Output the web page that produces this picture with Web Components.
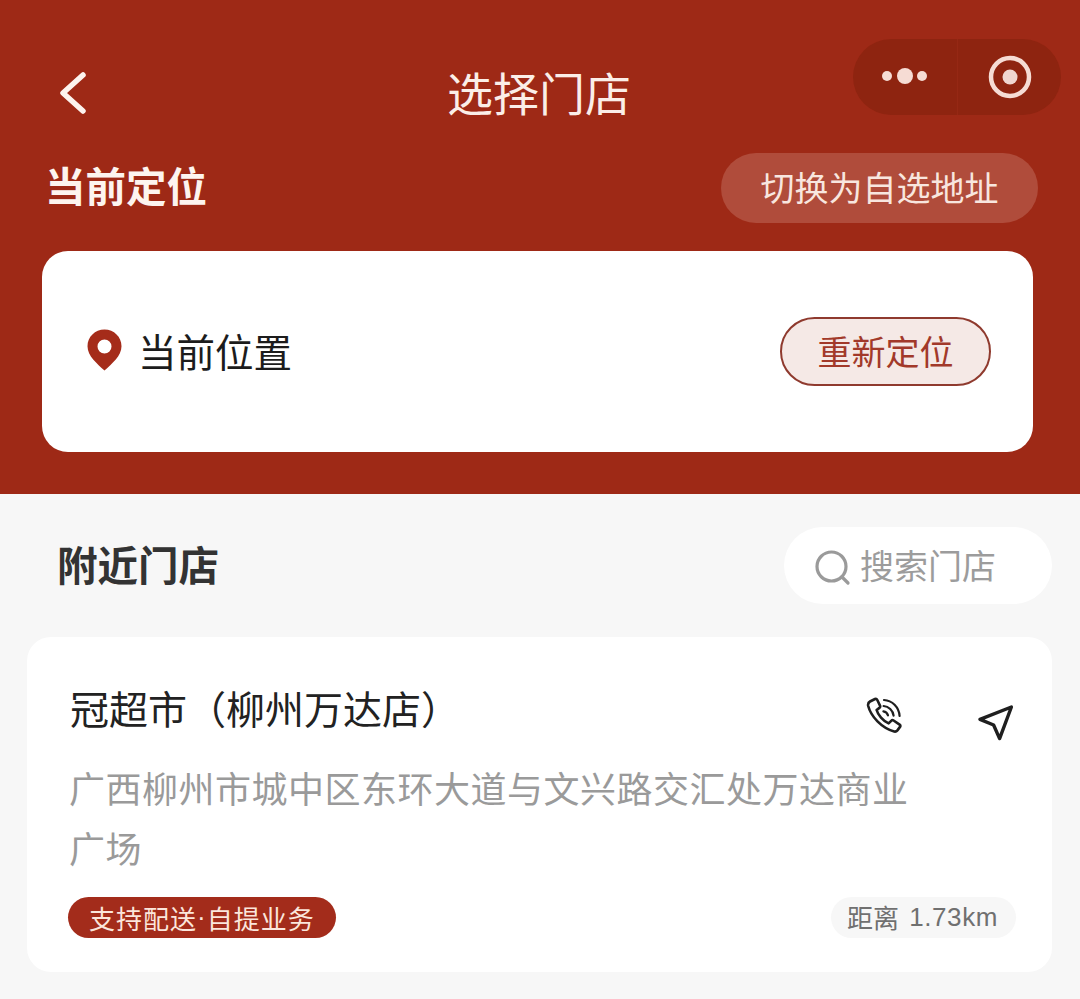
<!DOCTYPE html>
<html lang="zh">
<head>
<meta charset="utf-8">
<title>选择门店</title>
<style>
    html, body {
        margin: 0;
        background: #f7f7f7;
        font-family: "Noto Sans CJK SC", "Liberation Sans", sans-serif;
    }
</style>
</head>
<body>
<store-page></store-page>
<script>
class NavBar extends HTMLElement {
    constructor() {
        super();
        this.attachShadow({ mode: 'open' });
    }

    connectedCallback() {
        this.shadowRoot.innerHTML = `
            <style>
                :host {
                    display: grid;
                    grid-template-columns: 1fr auto 1fr;
                    align-items: start;
                    height: 153px;
                    box-sizing: border-box;
                    padding: 39px 19px 0 19px;
                }
                svg { display: block; }
                .title {
                    font-size: 46px;
                    line-height: 60px;
                    color: #fbeee8;
                    margin: 22px 0 0 -2px;
                }
                .back { margin: 31px 0 0 38px; }
                .capsule {
                    justify-self: end;
                    display: flex;
                    align-items: center;
                    width: 208px;
                    height: 76px;
                    box-sizing: border-box;
                    border-radius: 38px;
                    background: #8e2410;
                }
                .capsule > div {
                    flex: 1;
                    height: 100%;
                    display: flex;
                    align-items: center;
                    justify-content: center;
                }
                .capsule .more { flex: 0 0 105px; border-right: 1px solid #962814; padding-bottom: 2px; box-sizing: border-box; }
            </style>
            <svg class="back" width="34" height="46" viewBox="0 0 34 46">
                <path d="M26 5 L6 23 L26 41" fill="none" stroke="#fdf3ee" stroke-width="5.5" stroke-linecap="round" stroke-linejoin="round"/>
            </svg>
            <div class="title"><slot></slot></div>
            <div class="capsule">
                <div class="more">
                    <svg width="48" height="20" viewBox="0 0 48 20">
                        <circle cx="6" cy="10" r="5" fill="#f6dcd4"/>
                        <circle cx="24" cy="10" r="8" fill="#f6dcd4"/>
                        <circle cx="41" cy="10" r="5" fill="#f6dcd4"/>
                    </svg>
                </div>
                <div>
                    <svg width="44" height="44" viewBox="0 0 44 44">
                        <circle cx="22" cy="22" r="19" fill="none" stroke="#f6dcd4" stroke-width="4.5"/>
                        <circle cx="22" cy="22" r="7.5" fill="#f0d6d0"/>
                    </svg>
                </div>
            </div>
        `;
    }
}

class LocationPanel extends HTMLElement {
    constructor() {
        super();
        this.attachShadow({ mode: 'open' });
    }

    connectedCallback() {
        this.shadowRoot.innerHTML = `
            <style>
                :host {
                    display: block;
                    background: #9e2916;
                    height: 341px;
                    box-sizing: border-box;
                    padding: 0 47px 0 42px;
                }
                .head {
                    display: flex;
                    justify-content: space-between;
                    align-items: center;
                    height: 70px;
                    margin-bottom: 28px;
                }
                h2 {
                    margin: -8px 0 0 3px;
                    font-size: 40.5px;
                    font-weight: 700;
                    color: #fdf4ef;
                }
                .switch {
                    width: 317px;
                    height: 70px;
                    box-sizing: border-box;
                    padding-bottom: 4px;
                    margin-right: -5px;
                    border-radius: 35px;
                    background: #b04c3b;
                    color: #f8e6df;
                    font-size: 34px;
                    display: flex;
                    align-items: center;
                    justify-content: center;
                }
                .card {
                    height: 201px;
                    box-sizing: border-box;
                    background: #fff;
                    border-radius: 26px;
                    display: flex;
                    justify-content: space-between;
                    align-items: center;
                    padding: 0 42px 0 45px;
                }
                .place {
                    display: flex;
                    align-items: center;
                    gap: 16px;
                    font-size: 38.5px;
                    color: #1c1c1c;
                }
                .place span { padding-bottom: 4px; }
                .place svg { display: block; margin-top: -3px; }
                .relocate {
                    width: 211px;
                    height: 69px;
                    box-sizing: border-box;
                    padding-bottom: 2px;
                    border: 2.5px solid #8f3a2e;
                    border-radius: 35px;
                    background: #f5e9e6;
                    color: #a2392a;
                    font-size: 34px;
                    display: flex;
                    align-items: center;
                    justify-content: center;
                }
            </style>
            <div class="head">
                <h2>当前定位</h2>
                <div class="switch">切换为自选地址</div>
            </div>
            <div class="card">
                <div class="place">
                    <svg width="35" height="42" viewBox="0 0 35 42">
                        <path fill-rule="evenodd" fill="#a52c1a" d="M17.5 0.5C8 0.5 0.5 8 0.5 17.2 0.5 27 10 34.5 17.5 41.5 25 34.5 34.5 27 34.5 17.2 34.5 8 27 0.5 17.5 0.5ZM17.5 10.5a7 7 0 1 1 0 14a7 7 0 1 1 0-14Z"/>
                    </svg>
                    <span>当前位置</span>
                </div>
                <div class="relocate">重新定位</div>
            </div>
        `;
    }
}

class SearchPill extends HTMLElement {
    constructor() {
        super();
        this.attachShadow({ mode: 'open' });
    }

    connectedCallback() {
        this.shadowRoot.innerHTML = `
            <style>
                :host {
                    display: flex;
                    align-items: center;
                    gap: 9px;
                    width: 268px;
                    height: 77px;
                    box-sizing: border-box;
                    padding-left: 31px;
                    border-radius: 39px;
                    background: #fff;
                    color: #9c9c9c;
                    font-size: 34px;
                }
                span { padding-bottom: 2px; }
                svg { display: block; margin-top: 4px; }
            </style>
            <svg width="36" height="36" viewBox="0 0 36 36">
                <circle cx="16.5" cy="16.5" r="14.5" fill="none" stroke="#9a9a9a" stroke-width="3.2"/>
                <path d="M27 27 L33 33" fill="none" stroke="#9a9a9a" stroke-width="3.2" stroke-linecap="round"/>
            </svg>
            <span><slot></slot></span>
        `;
    }
}

class StoreCard extends HTMLElement {
    constructor() {
        super();
        this.attachShadow({ mode: 'open' });
    }

    connectedCallback() {
        const name = this.getAttribute('name') || '';
        const address = this.getAttribute('address') || '';
        const tag = (this.getAttribute('tag') || '').split('·');
        const distance = this.getAttribute('distance') || '';

        this.shadowRoot.innerHTML = `
            <style>
                :host {
                    display: block;
                    height: 335px;
                    box-sizing: border-box;
                    background: #fff;
                    border-radius: 24px;
                    padding: 42px 36px 0 43px;
                }
                svg { display: block; }
                .top {
                    display: flex;
                    justify-content: space-between;
                    align-items: center;
                    height: 56px;
                }
                .name { font-size: 39px; line-height: 56px; color: #222; }
                .actions { display: flex; align-self: flex-start; gap: 74px; margin-right: 2px; }
                .phone { margin-top: 18px; }
                .arrow { margin-top: 26px; }
                .address {
                    width: 850px;
                    margin: 22px 0 0 -1px;
                    font-size: 36px;
                    letter-spacing: 0.5px;
                    line-height: 60px;
                    color: #9a9a9a;
                }
                .bottom {
                    display: flex;
                    justify-content: space-between;
                    align-items: center;
                    margin-top: 20px;
                    margin-left: -2px;
                }
                .tag {
                    height: 41px;
                    box-sizing: border-box;
                    padding: 0 21px;
                    border-radius: 21px;
                    background: #a32c1b;
                    color: #fbe6dc;
                    font-size: 26px;
                    letter-spacing: 1px;
                    display: flex;
                    align-items: center;
                }
                .tag i { font: 400 26px "Liberation Sans", sans-serif; }
                .distance {
                    height: 41px;
                    box-sizing: border-box;
                    padding: 0 18px 0 16px;
                    border-radius: 21px;
                    background: #f7f7f7;
                    color: #707070;
                    font-size: 26px;
                    display: flex;
                    align-items: center;
                    gap: 10px;
                }
                .distance span { padding-bottom: 3px; }
                .distance b { font: 400 26px "Liberation Sans", sans-serif; letter-spacing: 0.6px; }
            </style>
            <div class="top">
                <div class="name">${name}</div>
                <div class="actions">
                    <svg class="phone" width="38" height="38" viewBox="0 0 38 38" fill="none" stroke="#1f1f1f" stroke-linecap="round" stroke-linejoin="round">
                        <path stroke-width="2.6" d="M4 4.5 L9 2 C10 1.6 10.8 2 11.3 3 L14 8.6 C14.4 9.5 14.2 10.3 13.4 10.9 L10.6 13 C12 18 17 24 22.6 26.4 L25.2 23.8 C25.9 23.1 26.8 23 27.6 23.5 L33.6 27.6 C34.5 28.2 34.6 29.1 34 29.9 L31.4 33.4 C30.6 34.4 29.5 34.8 28.2 34.5 C15.5 31 5 19.5 2.2 9 C1.8 7 2.4 5.4 4 4.5 Z"/>
                        <path stroke-width="2.2" d="M18 3 C26 3.4 33 10 33.6 19"/>
                        <path stroke-width="2.2" d="M17.6 9 C22.6 9.4 27 13.4 27.6 18.6"/>
                        <path stroke-width="2.2" d="M17.4 14.4 C19.6 14.8 21.4 16.4 22 18.4"/>
                    </svg>
                    <svg class="arrow" width="36" height="36" viewBox="0 0 36 36" fill="none" stroke="#1f1f1f" stroke-width="3.4" stroke-linejoin="round">
                        <path d="M2 14.4 L33.4 2 L21.6 33.6 L15.6 20 Z"/>
                    </svg>
                </div>
            </div>
            <div class="address">${address}</div>
            <div class="bottom">
                <div class="tag">${tag[0]}<i>·</i>${tag[1]}</div>
                <div class="distance"><span>距离</span><b>${distance}</b></div>
            </div>
        `;
    }
}

class StorePage extends HTMLElement {
    constructor() {
        super();
        this.attachShadow({ mode: 'open' });
    }

    connectedCallback() {
        this.shadowRoot.innerHTML = `
            <style>
                :host {
                    display: block;
                    width: 1080px;
                    height: 999px;
                    overflow: hidden;
                    background: #f7f7f7;
                }
                .red { background: #9e2916; }
                .nearby {
                    display: flex;
                    justify-content: space-between;
                    align-items: center;
                    padding: 33px 28px 33px 57px;
                }
                h3 {
                    margin: -5px 0 0 0;
                    font-size: 40.5px;
                    font-weight: 700;
                    color: #333;
                }
                store-card { margin: 0 28px 0 27px; }
            </style>
            <div class="red">
                <nav-bar>选择门店</nav-bar>
            </div>
            <location-panel></location-panel>
            <div class="nearby">
                <h3>附近门店</h3>
                <search-pill>搜索门店</search-pill>
            </div>
            <store-card
                name="冠超市（柳州万达店）"
                address="广西柳州市城中区东环大道与文兴路交汇处万达商业广场"
                tag="支持配送·自提业务"
                distance="1.73km"></store-card>
        `;
    }
}

customElements.define('nav-bar', NavBar);
customElements.define('location-panel', LocationPanel);
customElements.define('search-pill', SearchPill);
customElements.define('store-card', StoreCard);
customElements.define('store-page', StorePage);
</script>
</body>
</html>
